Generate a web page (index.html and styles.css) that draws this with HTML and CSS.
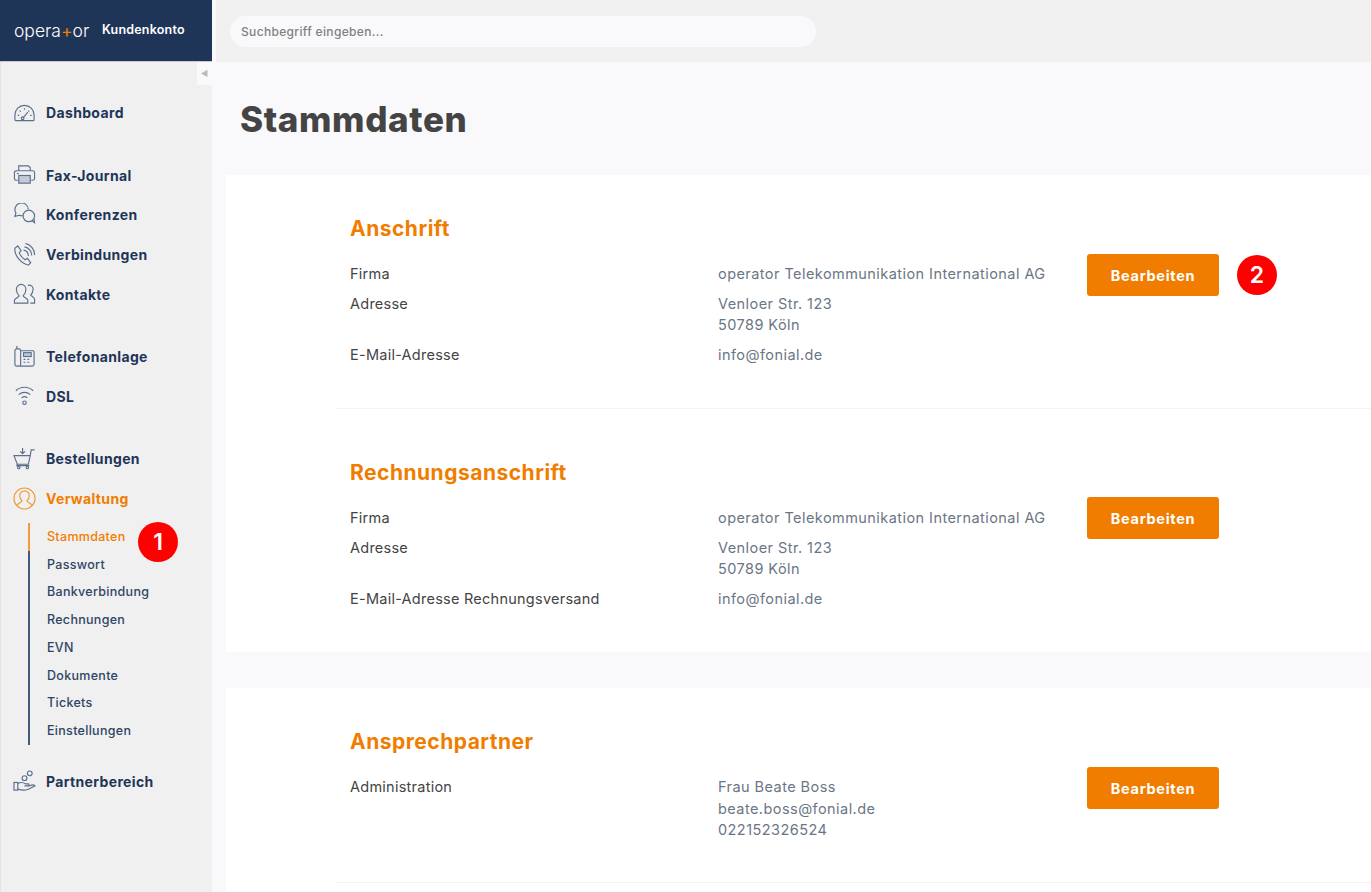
FILE: index.html
```html
<!DOCTYPE html>
<html lang="de">
<head>
  <meta charset="UTF-8">
  <meta name="viewport" content="width=device-width, initial-scale=1.0">
  <title>Stammdaten</title>
  <link rel="stylesheet" href="styles.css">
</head>
<body>
  <div class="app">
    <aside class="sidebar">
      <div class="brand">
        <span class="brand-logo">opera<span class="brand-plus">+</span>or</span>
        <span class="brand-name">Kundenkonto</span>
      </div>
      <div class="sidebar-toggle">◀</div>
      <nav class="nav">
        <div class="nav-group">
          <a class="nav-item">
            <svg class="nav-icon" viewBox="0 0 24 24"><path d="M2 19.500v-5a10 10 0 0 1 20 0v5a1 1 0 0 1-1 1H3a1 1 0 0 1-1-1z"/><path d="M10.500 17.500l5-6M5 15h1.500M18 15h1.500M7 10l1 1M12 7.500V9M17 10l-1 1"/><circle cx="10" cy="18" r="1.400"/></svg>
            Dashboard
          </a>
        </div>
        <div class="nav-group">
          <a class="nav-item">
            <svg class="nav-icon" viewBox="0 0 24 24"><path d="M6 7V2h10l2 2v3"/><path d="M5 17H3.500a2 2 0 0 1-2-2V9a2 2 0 0 1 2-2h17a2 2 0 0 1 2 2v6a2 2 0 0 1-2 2H19"/><rect class="fill" x="6" y="12" width="12" height="8"/><path d="M4 10h2"/></svg>
            Fax-Journal
          </a>
          <a class="nav-item">
            <svg class="nav-icon" viewBox="0 0 24 24"><path d="M10 13.200c-1.200.2-2.500 0-3.500-.4L2 14l1-3.500A7 7 0 1 1 16 6.500"/><circle cx="16.500" cy="13.500" r="6"/><path d="M20 18.500l2.500 2-.5-4"/></svg>
            Konferenzen
          </a>
          <a class="nav-item">
            <svg class="nav-icon" viewBox="0 0 24 24"><path d="M2 5.500l3-2.500 3.500 5-2 2c1 3 3 5.500 6 7.500l2.500-1.500 3.500 4.500-2.500 2.500C9 22 1 13 2 5.500z"/><path d="M11 7.500a6 6 0 0 1 5 6M12 4a9 9 0 0 1 7.500 9M13 .5a12 12 0 0 1 9.500 12"/></svg>
            Verbindungen
          </a>
          <a class="nav-item">
            <svg class="nav-icon" viewBox="0 0 24 24"><path d="M1.500 21v-3c0-2 4.500-3 5-4.500-2-2-3-4-3-7a5 5 0 0 1 10 0c0 3-1 5-3 7 .5 1.500 5 2.500 5 4.500v3z"/><path d="M15.500 2.500c3-1 5.500 1 5.500 4 0 2.500-1 4.500-2.500 6 .5 1.500 4 2 4 4.500v4H18"/></svg>
            Kontakte
          </a>
        </div>
        <div class="nav-group">
          <a class="nav-item">
            <svg class="nav-icon" viewBox="0 0 24 24"><rect x="2" y="4" width="6" height="18" rx="2"/><path d="M4 4V1M8 6h13a2 2 0 0 1 1 2v12a2 2 0 0 1-2 2H7"/><rect class="fill" x="11" y="8" width="8" height="4"/><path d="M11 15h2M15 15h2M11 18h2M15 18h2"/></svg>
            Telefonanlage
          </a>
          <a class="nav-item">
            <svg class="nav-icon" viewBox="0 0 24 24"><path d="M3 6a13 13 0 0 1 18 0M6 10a9 9 0 0 1 12 0M9 13.500a4.500 4.500 0 0 1 6 0"/><circle cx="12" cy="18.500" r="1.800"/></svg>
            DSL
          </a>
        </div>
        <div class="nav-group">
          <a class="nav-item">
            <svg class="nav-icon" viewBox="0 0 24 24"><path d="M1 9h17l-2 9H4.500zM18 9l1-6h3.500"/><path d="M4.500 18l-.5 1.500h13"/><circle cx="6" cy="21.500" r="1.300"/><circle cx="15" cy="21.500" r="1.300"/><path d="M10 1v6M7.500 4.500L10 7l2.500-2.500"/></svg>
            Bestellungen
          </a>
          <a class="nav-item nav-item-active">
            <svg class="nav-icon" viewBox="0 0 24 24"><circle cx="12" cy="12" r="11"/><path d="M4.500 20v-1c0-2 4.500-3 5-4.500-1.500-1.500-2.500-3-2.500-5.500a5 5 0 0 1 10 0c0 2.500-1 4-2.500 5.500.5 1.500 5 2.500 5 4.500v1"/></svg>
            Verwaltung
          </a>
          <div class="subnav">
            <a class="subnav-item subnav-item-active">Stammdaten</a>
            <a class="subnav-item">Passwort</a>
            <a class="subnav-item">Bankverbindung</a>
            <a class="subnav-item">Rechnungen</a>
            <a class="subnav-item">EVN</a>
            <a class="subnav-item">Dokumente</a>
            <a class="subnav-item">Tickets</a>
            <a class="subnav-item">Einstellungen</a>
          </div>
          <a class="nav-item nav-item-last">
            <svg class="nav-icon" viewBox="0 0 24 24"><circle cx="17.500" cy="3.500" r="2.500"/><circle cx="12" cy="8.500" r="2.500"/><rect x="1" y="13" width="4" height="8"/><path d="M5 14c3-1.500 6-1 8 .5h3c1 0 1 2 0 2h-4M5 20c5 1.500 8 1.500 11 0l7-3.500c-1-1-3-1-4.500-.5L15 17"/></svg>
            Partnerbereich
          </a>
        </div>
      </nav>
    </aside>

    <div class="main">
      <header class="topbar">
        <input class="search" type="text" placeholder="Suchbegriff eingeben...">
      </header>
      <div class="content">
        <h1 class="page-title">Stammdaten</h1>

        <section class="card">
          <div class="block">
            <h2 class="block-title">Anschrift</h2>
            <div class="block-grid">
              <div class="rows">
                <div class="row"><span class="row-label">Firma</span><span class="row-value">operator Telekommunikation International AG</span></div>
                <div class="row"><span class="row-label">Adresse</span><span class="row-value">Venloer Str. 123<br>50789 Köln</span></div>
                <div class="row"><span class="row-label">E-Mail-Adresse</span><span class="row-value">info@fonial.de</span></div>
              </div>
              <button class="edit-btn">Bearbeiten</button>
            </div>
          </div>
          <div class="block">
            <h2 class="block-title">Rechnungsanschrift</h2>
            <div class="block-grid">
              <div class="rows">
                <div class="row"><span class="row-label">Firma</span><span class="row-value">operator Telekommunikation International AG</span></div>
                <div class="row"><span class="row-label">Adresse</span><span class="row-value">Venloer Str. 123<br>50789 Köln</span></div>
                <div class="row"><span class="row-label">E-Mail-Adresse Rechnungsversand</span><span class="row-value">info@fonial.de</span></div>
              </div>
              <button class="edit-btn">Bearbeiten</button>
            </div>
          </div>
        </section>

        <section class="card">
          <div class="block block-single">
            <h2 class="block-title">Ansprechpartner</h2>
            <div class="block-grid">
              <div class="rows">
                <div class="row"><span class="row-label">Administration</span><span class="row-value">Frau Beate Boss<br>beate.boss@fonial.de<br>022152326524</span></div>
              </div>
              <button class="edit-btn">Bearbeiten</button>
            </div>
          </div>
        </section>
      </div>
    </div>
  </div>

  <!-- call-outs that sit over the screenshot -->
  <span class="callout callout-one">1</span>
  <span class="callout callout-two">2</span>
</body>
</html>
```
FILE: styles.css
```css
/* Root */
html, body {
  margin: 0;
  padding: 0;
  height: 892px;
  overflow: hidden;
}
body {
  position: relative;
  font-family: "Inter", "Liberation Sans", sans-serif;
  background: #f9f9fb;
  color: #444444;
}
h1, h2 {
  margin: 0;
}

.app {
  display: flex;
  height: 892px;
}

/* Sidebar */
.sidebar {
  position: relative;
  flex: 0 0 212px;
  box-sizing: border-box;
  background: #f0f0f0;
  border-left: 1px solid #e4e4e4;
}
.brand {
  display: flex;
  align-items: center;
  height: 61px;
  margin-left: -1px;
  padding-left: 14px;
  background: #1f3558;
  border-bottom: 1px solid #c5cad3;
  color: #ffffff;
}
.brand-logo {
  width: 88px;
  font-weight: 300;
  font-size: 17.500px;
}
.brand-plus {
  color: #f07d00;
  font-weight: 400;
}
.brand-name {
  margin-top: -2px;
  font-size: 12.500px;
  font-weight: 600;
  letter-spacing: 0.200px;
}
.sidebar-toggle {
  position: absolute;
  top: 62px;
  right: 0;
  width: 15px;
  height: 23px;
  background: #f9f9fb;
  color: #bbbbbb;
  font-size: 8px;
  line-height: 23px;
  text-align: center;
}

.nav {
  padding-top: 31px;
}
.nav-group {
  margin-bottom: 23px;
}
.nav-item {
  display: flex;
  align-items: center;
  gap: 10px;
  height: 39.600px;
  padding-left: 12px;
  color: #1f3558;
  font-size: 14px;
  font-weight: 700;
  letter-spacing: 0.350px;
}
.nav-icon {
  width: 23px;
  height: 23px;
  flex: none;
  fill: none;
  stroke: #5b6f8f;
  stroke-width: 1.200;
}
.nav-icon .fill {
  fill: #c3cad5;
}
.nav-item-active {
  color: #f07d00;
}
.nav-item-active .nav-icon {
  stroke: #f29a3c;
}
.nav-item-last {
  margin-top: 16.500px;
}

.subnav {
  margin: 4.500px 0 0 27px;
}
.subnav-item {
  display: block;
  height: 27.750px;
  line-height: 27.750px;
  padding-left: 17px;
  border-left: 2px solid #44597c;
  color: #2f4565;
  font-size: 12.500px;
  font-weight: 500;
  letter-spacing: 0.300px;
}
.subnav-item-active {
  border-left-color: #f29a3c;
  color: #f07d00;
}

/* Main area */
.main {
  flex: 1;
  min-width: 0;
  margin-left: 4px;
}
.topbar {
  height: 62px;
  box-sizing: border-box;
  padding: 16px 14px;
  background: #f0f0f0;
}
.search {
  display: block;
  box-sizing: border-box;
  width: 586px;
  height: 31px;
  padding: 0 11px;
  border: 0;
  border-radius: 16px;
  background: #f9f9fb;
  font-family: inherit;
  font-size: 12px;
  font-weight: 500;
  letter-spacing: 0.330px;
}
.search::placeholder {
  color: #808080;
  opacity: 1;
}
.content {
  padding-left: 10px;
}
.page-title {
  padding: 36px 0 35px 14px;
  color: #444444;
  font-size: 35px;
  line-height: 42px;
  font-weight: 800;
  letter-spacing: 0.600px;
}

/* Cards */
.card {
  background: #ffffff;
  margin-bottom: 36px;
}
.card:last-child {
  padding-bottom: 40px;
}
.block {
  margin-left: 110px;
  padding: 38px 0 0 14px;
  height: 195px;
  border-bottom: 1px solid #f3f3f3;
}
.block + .block {
  border-bottom: 0;
  height: 195px;
  padding-top: 48px;
}
.block-single {
  height: 156px;
}
.block-title {
  color: #f07d00;
  font-size: 21px;
  line-height: 32px;
  font-weight: 700;
  letter-spacing: 0.500px;
}
.block-grid {
  display: flex;
  align-items: flex-start;
  margin-top: 9px;
}
.block + .block .block-grid {
  margin-top: 8px;
}
.rows {
  width: 737px;
  padding-top: 9px;
}
.block + .block .rows {
  padding-top: 10px;
}
.row {
  display: flex;
  font-size: 14.500px;
  line-height: 21.500px;
  margin-bottom: 8px;
  letter-spacing: 0.250px;
}
.row-label {
  flex: 0 0 368px;
}
.row-value {
  color: #6b7685;
  letter-spacing: 0.440px;
}
.edit-btn {
  width: 132px;
  height: 42px;
  border: 0;
  border-radius: 3px;
  background: #f07d00;
  color: #ffffff;
  font-family: inherit;
  font-size: 14.500px;
  font-weight: 700;
  letter-spacing: 0.700px;
}

/* Call-outs */
.callout {
  position: absolute;
  width: 40px;
  height: 40px;
  border-radius: 50%;
  background: #ff0000;
  color: #ffffff;
  font-family: "Inter", sans-serif;
  font-size: 23px;
  font-weight: 600;
  line-height: 40px;
  text-align: center;
}
.callout-one {
  left: 138px;
  top: 522px;
}
.callout-two {
  left: 1237px;
  top: 255px;
}
```
